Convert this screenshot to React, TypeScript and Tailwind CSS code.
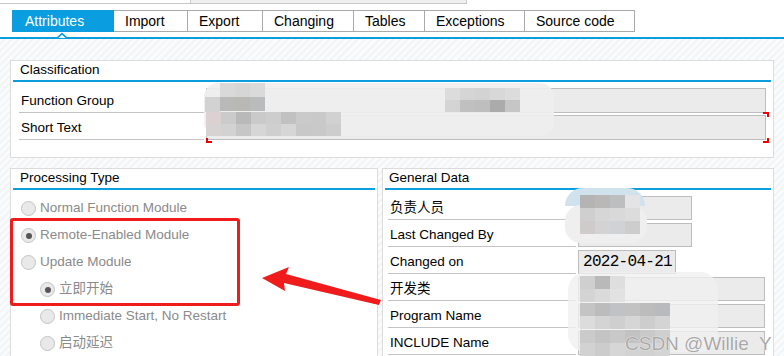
import React from 'react';

const TABS = [
  { label: 'Attributes', w: 102, active: true },
  { label: 'Import', w: 74 },
  { label: 'Export', w: 75 },
  { label: 'Changing', w: 91 },
  { label: 'Tables', w: 71 },
  { label: 'Exceptions', w: 100 },
  { label: 'Source code', w: 110 },
];

const RADIOS = [
  { label: 'Normal Function Module', sub: false, on: false },
  { label: 'Remote-Enabled Module', sub: false, on: true },
  { label: 'Update Module', sub: false, on: false },
  { label: '立即开始', sub: true, on: true },
  { label: 'Immediate Start, No Restart', sub: true, on: false },
  { label: '启动延迟', sub: true, on: false },
];

const GENERAL = [
  { label: '负责人员', w: 114 },
  { label: 'Last Changed By', w: 114 },
  { label: 'Changed on', w: 98, value: '2022-04-21' },
  { label: '开发类', w: 187 },
  { label: 'Program Name', w: 187 },
  { label: 'INCLUDE Name', w: 187 },
];

// pixelated blur blocks, each: x, y, rows of colours (15px cells)
const MOSAICS: { x: number; y: number; h: number; rows: string[][] }[] = [
  { x: 220, y: 83, h: 14, rows: [['#d9d9d9', '#d6d6d6', '#dadada'], ['#b9b9b9', '#bab8b4', '#babbbd']] },
  { x: 205, y: 97, h: 15, rows: [['#d2d2d2']] },
  { x: 445, y: 88, h: 12, rows: [['#dcdcdc', '#d5d5d5', '#d3d3d3', '#d8d8d8', '#dcdcdc'], ['#d4d4d4', '#c0c0c0', '#bebebe', '#ababab', '#c6c6c6']] },
  { x: 206, y: 112, h: 12, rows: [['#dbd1d1', '#cbcbcb', '#b9b9b9', '#cacaca', '#cdcdcd', '#c1c1c1', '#cacaca', '#c9c9c9', '#d1d1d1'], ['#d7d3d3', '#d2d2d2', '#c6c6c6', '#d6d6d6', '#cfcfcf', '#d6d6d6', '#c8c8c8', '#c9c9c9', '#cdcdcd']] },
  { x: 580, y: 195, h: 13, rows: [['#b4b4b4', '#bab8b6', '#bcbec0', '#e4e4e6'], ['#d0cfcf', '#d6d6d6', '#d9d9d9', '#dcdcdc'], ['#cfcbcb', '#d3d3d3', '#d0d3d6', '#cdcdcd']] },
  { x: 580, y: 276, h: 13, rows: [['#cfcfcf', '#b9b9b9', '#dedede'], ['#d4d4d4', '#dadada', '#e2e2e2']] },
  { x: 580, y: 303, h: 13, rows: [['#c4c4c4', '#bcbcbc', '#c0c2c6', '#c2c2c2', '#bcbcbc', '#b9babe'], ['#dcdcdc', '#d4d4d4', '#cfcfcf', '#d6d6d6', '#cdcdcd', '#d4d4d4']] },
  { x: 580, y: 330, h: 13, rows: [['#cbcbcb', '#c4c4c4', '#c9c9c9', '#c2c2c2', '#c9c9c9', '#cfcfcf'], ['#d2d2d2', '#cccccc', '#d6d6d6', '#d3d3d3', '#d1d1d1', '#d4d4d4']] },
];

function Radio({ on }: { on: boolean }) {
  return (
    <span className="w-[15px] h-[15px] rounded-full border border-[#c4c4c4] bg-[#e9e9e9] flex items-center justify-center shrink-0">
      {on && <span className="w-[6px] h-[6px] rounded-full bg-[#555]" />}
    </span>
  );
}

function PanelTitle({ text, pad = 'pl-[9px]' }: { text: string; pad?: string }) {
  return (
    <>
      <div className={`h-[19px] ${pad} flex items-center text-[13.5px] text-black`}>{text}</div>
      <div className="mx-[2px] h-[2px] bg-[#0a9de0]" />
    </>
  );
}

export default function App() {
  return (
    <div
      className="relative w-[784px] h-[356px] overflow-hidden bg-[repeating-linear-gradient(135deg,#f3f4f6_0px,#f3f4f6_2px,#fafbfc_2px,#fafbfc_5px)] text-[13.5px]"
      style={{ fontFamily: '"Liberation Sans", "Noto Sans CJK SC", sans-serif' }}
    >
      {/* header + tabs */}
      <div className="bg-white h-[37px]">
        <div className="flex h-[10px]">
          <div className="w-[190px] h-[4px] border-b border-[#c8c8c8]" />
          <div className="w-[277px] h-[4px] bg-[#efefef] border-l border-r border-b border-[#c8c8c8]" />
        </div>
        <div className="flex ml-[12px] h-[22px]">
          {TABS.map((t) => (
            <div
              key={t.label}
              style={{ width: t.w }}
              className={
                t.active
                  ? 'bg-[#0a9de0] text-white pl-[13px] flex items-center text-[14px]'
                  : 'bg-white text-black border border-l-0 border-[#aaa] pl-[11px] flex items-center text-[14px]'
              }
            >
              {t.label}
            </div>
          ))}
        </div>
      </div>
      <div className="h-[2px] bg-[#0a9de0]" />
      <svg className="absolute left-[56px] top-[32px]" width="12" height="6" viewBox="0 0 12 6">
        <path d="M0 6 L6 0.5 L12 6 Z" fill="#0a9de0" />
        <path d="M2.5 6 L6 2.8 L9.5 6 Z" fill="#fff" />
      </svg>

      {/* Classification */}
      <div className="ml-[10px] mt-[21px] w-[764px] h-[98px] bg-white border border-[#dcdcdc]">
        <PanelTitle text="Classification" />
        <div className="mt-[4px]">
          {['Function Group', 'Short Text'].map((l, i) => (
            <div key={l} className="flex h-[27px]">
              <div className="ml-[8px] w-[185px] h-[27px] border-b border-[#c4c4c4] flex items-center pt-[5px] pl-[2px] text-black">{l}</div>
              <div className="relative ml-[2px] mt-[2px] w-[560px] h-[25px] border border-[#bdbdbd] bg-[#ebebeb]">
                {i === 1 && (
                  <>
                    <span className="absolute -left-[1px] -bottom-[4px] w-[6px] h-[5px] border-l-2 border-b-2 border-[#e00]" />
                    <span className="absolute -right-[4px] -top-[4px] w-[6px] h-[5px] border-r-2 border-t-2 border-[#e00]" />
                    <span className="absolute -right-[4px] -bottom-[4px] w-[6px] h-[5px] border-r-2 border-b-2 border-[#e00]" />
                  </>
                )}
              </div>
            </div>
          ))}
        </div>
      </div>

      <div className="flex gap-[4px] ml-[10px] mt-[10px]">
        {/* Processing Type */}
        <div className="w-[368px] h-[200px] bg-white border border-[#dcdcdc]">
          <PanelTitle text="Processing Type" />
          <div className="mt-[5px] text-[#8a8a8a]">
            {RADIOS.map((r) => (
              <div key={r.label} className={`flex items-center h-[27px] gap-[4px] ${r.sub ? 'pl-[29px]' : 'pl-[10px]'}`}>
                <Radio on={r.on} />
                <span>{r.label}</span>
              </div>
            ))}
          </div>
        </div>

        {/* General Data */}
        <div className="w-[392px] h-[200px] bg-white border border-[#dcdcdc]">
          <PanelTitle text="General Data" pad="pl-[6px]" />
          <div className="mt-[3px]">
            {GENERAL.map((g) => (
              <div key={g.label} className="flex h-[27px]">
                <div className="ml-[5px] w-[188px] h-[27px] border-b border-[#c4c4c4] flex items-center pt-[5px] pl-[2px] text-black">{g.label}</div>
                <div
                  style={{ width: g.w }}
                  className="ml-[2px] mt-[3px] h-[24px] border border-[#bdbdbd] bg-[#ebebeb] flex items-center pl-[4px] text-black"
                >
                  {g.value && (
                    <span className="text-[16px] tracking-[-0.7px]" style={{ fontFamily: '"Liberation Mono", monospace' }}>
                      {g.value}
                    </span>
                  )}
                </div>
              </div>
            ))}
          </div>
        </div>
      </div>

      {/* blurred, pixelated content */}
      <div className="absolute left-[204px] top-[83px] w-[350px] h-[53px] rounded-[14px] bg-[#eeeeee] opacity-90" />
      <div className="absolute left-[565px] top-[188px] w-[80px] h-[18px] rounded-t-[20px] bg-[#cfe2ee]" />
      <div className="absolute left-[565px] top-[205px] w-[82px] h-[38px] rounded-[16px] bg-[#efefef]" />
      <div className="absolute left-[568px] top-[272px] w-[150px] h-[80px] rounded-[18px] bg-[#f0f0f0] opacity-80" />
      {MOSAICS.map((m, i) => (
        <div key={i} className="absolute" style={{ left: m.x, top: m.y }}>
          {m.rows.map((row, j) => (
            <div key={j} className="flex">
              {row.map((c, k) => (
                <div key={k} style={{ width: 15, height: m.h, background: c }} />
              ))}
            </div>
          ))}
        </div>
      ))}

      {/* annotation */}
      <div className="absolute left-[10px] top-[218px] w-[230px] h-[88px] border-[3px] border-[#f01b1b] rounded-[3px]" />
      <svg className="absolute left-[258px] top-[262px]" width="126" height="48" viewBox="0 0 126 48">
        <path d="M4 16 L31 5 L28 12 L123 38 L121 43 L26 21 L27 29 Z" fill="#f01b1b" />
      </svg>

      <div
        className="absolute left-[625px] top-[330px] text-[19px] text-[#a8a8a8] whitespace-pre"
        style={{ fontFamily: '"Liberation Sans", sans-serif', textShadow: '0 0 1px #fff, 0 0 1px #fff' }}
      >
        CSDN @Willie  Y
      </div>
    </div>
  );
}
